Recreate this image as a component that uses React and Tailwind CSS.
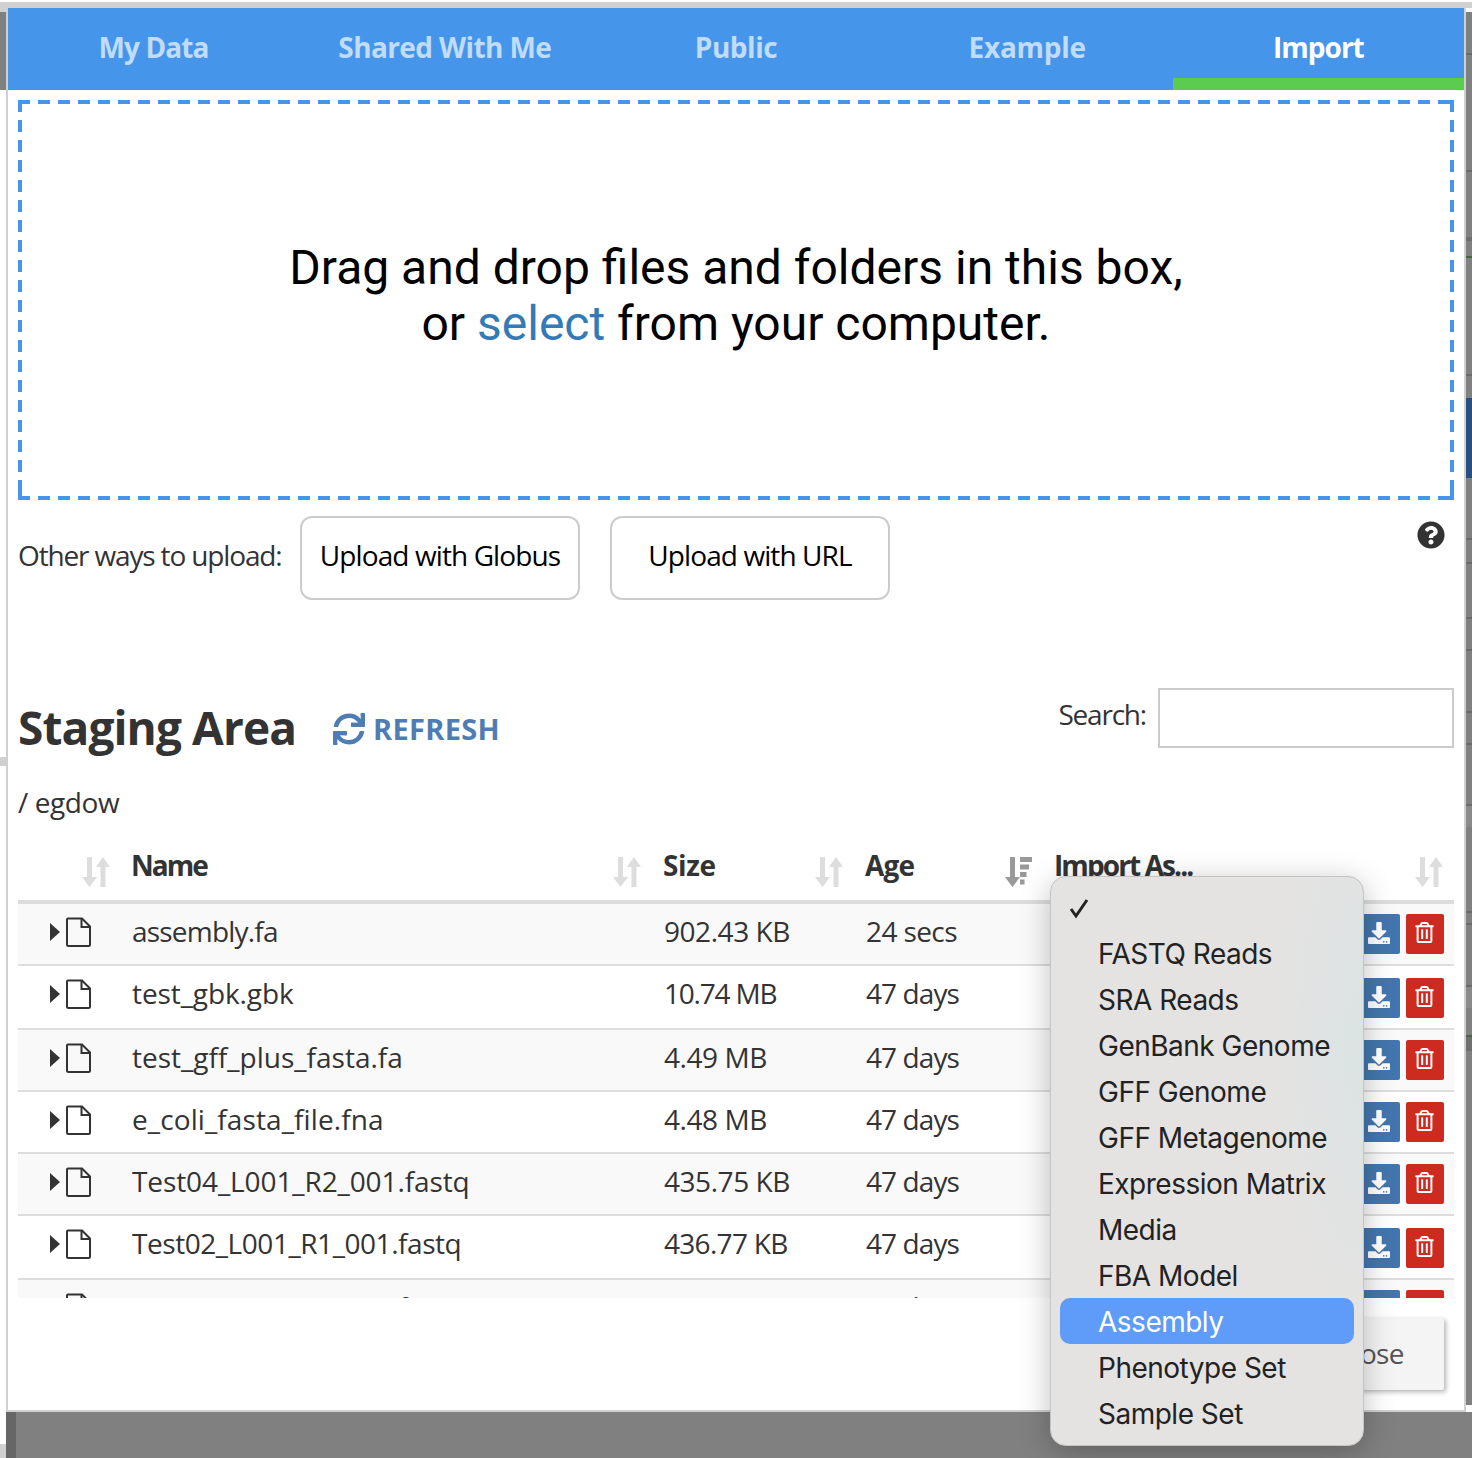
import React from "react";
import { FaQuestionCircle, FaSync, FaDownload, FaRegTrashAlt } from "react-icons/fa";

const tabs = [
  { t: "My Data", tr: "tracking-[-0.9px]" },
  { t: "Shared With Me", tr: "tracking-[-0.6px]" },
  { t: "Public", tr: "tracking-[-0.45px]" },
  { t: "Example", tr: "tracking-[-0.25px]" },
  { t: "Import", tr: "tracking-[-1px]" },
];

const rows = [
  { name: "assembly.fa", nt: "tracking-[-0.8px]", size: "902.43 KB", st: "tracking-[-0.45px]", age: "24 secs", at: "tracking-[-0.6px]", h: "h-[62px]", btn: "pt-[10px]", odd: true },
  { name: "test_gbk.gbk", nt: "tracking-[-0.1px]", size: "10.74 MB", st: "tracking-[-1.2px]", age: "47 days", at: "tracking-[-0.9px]", h: "h-[64px]", btn: "pt-[12px]" },
  { name: "test_gff_plus_fasta.fa", nt: "tracking-[0px]", size: "4.49 MB", st: "tracking-[-0.45px]", age: "47 days", at: "tracking-[-0.9px]", h: "h-[62px]", btn: "pt-[10px]", odd: true },
  { name: "e_coli_fasta_file.fna", nt: "tracking-[0.1px]", size: "4.48 MB", st: "tracking-[-0.45px]", age: "47 days", at: "tracking-[-0.9px]", h: "h-[62px]", btn: "pt-[10px]" },
  { name: "Test04_L001_R2_001.fastq", nt: "tracking-[-0.1px]", size: "435.75 KB", st: "tracking-[-0.45px]", age: "47 days", at: "tracking-[-0.9px]", h: "h-[62px]", btn: "pt-[10px]", odd: true },
  { name: "Test02_L001_R1_001.fastq", nt: "tracking-[-0.45px]", size: "436.77 KB", st: "tracking-[-0.7px]", age: "47 days", at: "tracking-[-0.9px]", h: "h-[64px]", btn: "pt-[12px]" },
  { name: "Test03_L001_R1_001.fastq", nt: "tracking-[-0.45px]", size: "437.14 KB", st: "tracking-[-0.45px]", age: "47 days", at: "tracking-[-0.9px]", h: "h-[62px]", btn: "pt-[10px]", odd: true },
];

const menu = ["FASTQ Reads", "SRA Reads", "GenBank Genome", "GFF Genome", "GFF Metagenome", "Expression Matrix", "Media", "FBA Model", "Assembly", "Phenotype Set", "Sample Set"];

const rightStrip = [
  [4, "#fff"], [41, "#808080"], [2, "#6a6a6a"], [115, "#808080"], [2, "#6a6a6a"], [65, "#808080"], [4, "#6e6e6e"], [15, "#808080"], [2, "#3f6b3f"],
  [116, "#808080"], [2, "#6a6a6a"], [22, "#808080"], [80, "#27507f"], [60, "#808080"], [2, "#6a6a6a"], [22, "#808080"], [2, "#6a6a6a"], [53, "#808080"], [2, "#6a6a6a"], [30, "#808080"], [2, "#6a6a6a"], [60, "#808080"], [2, "#6a6a6a"],
  [30, "#808080"], [2, "#6a6a6a"], [59, "#808080"], [2, "#6a6a6a"], [21, "#8a8a8a"], [84, "#808080"], [2, "#6a6a6a"], [10, "#808080"], [2, "#6a6a6a"], [60, "#808080"], [2, "#6a6a6a"], [21, "#8a8a8a"], [27, "#808080"], [2, "#3f6b3f"], [14, "#6f6f6f"], [354, "#808080"],
];

function SortIcon({ active }) {
  if (active) {
    return (
      <svg width="28" height="30" viewBox="0 0 28 30" className="shrink-0">
        <path d="M5 0h5v20h5L7.500 30 0 20h5z" fill="#999" />
        <path d="M15 0h12v5H15zM15 7.500h9v5h-9zM15 15h6.500v5H15zM15 22.500h4.500v5H15z" fill="#999" />
      </svg>
    );
  }
  return (
    <svg width="28" height="30" viewBox="0 0 28 30" className="shrink-0">
      <path d="M5 0h5v20h5L7.500 30 0 20h5z" fill="#ddd" />
      <path d="M21 0l7 10h-4.500v20h-5V10H14z" fill="#ddd" />
    </svg>
  );
}

function FileIcon() {
  return (
    <svg width="26" height="30" viewBox="0 0 26 30" className="shrink-0">
      <path d="M2 1.500h14l8 8v18a1.500 1.500 0 0 1-1.500 1.500h-20A1.500 1.500 0 0 1 1 27.500V2.500A1 1 0 0 1 2 1.500z" fill="none" stroke="#333" strokeWidth="2" />
      <path d="M15.500 1.500v8.500H24" fill="none" stroke="#333" strokeWidth="2" />
    </svg>
  );
}

function Caret() {
  return (
    <svg width="10" height="18" viewBox="0 0 10 18" className="shrink-0">
      <path d="M0 0l10 9-10 9z" fill="#333" />
    </svg>
  );
}

export default function App() {
  return (
    <div className="relative w-[1472px] h-[1458px] bg-white flex flex-col overflow-hidden text-[#333] font-['Open_Sans',sans-serif]">
      <div className="h-[2px] bg-white" />
      <div className="h-[6px] bg-[#d0d0d0]" />

      <div className="flex h-[1404px]">
        <div className="w-[6px] flex flex-col shrink-0">
          <div className="h-[4px] bg-[#d0d0d0]" />
          <div className="h-[78px] bg-[#808080]" />
          <div className="h-[667px] bg-white" />
          <div className="h-[9px] bg-[#d0d0d0]" />
        </div>

        <div className="w-[1460px] shrink-0 border-x-2 border-b-2 border-[#d0d0d0] bg-white flex flex-col">
          <div className="h-[82px] bg-[#4596ea] flex shrink-0">
            {tabs.map(({ t, tr }) => (
              <div
                key={t}
                className={
                  t === "Import"
                    ? `flex-1 text-center text-white text-[28px] font-bold ${tr} pt-[18px] border-b-[12px] border-[#5ccc50]`
                    : `flex-1 text-center text-[#c0dcf9] text-[28px] font-bold ${tr} pt-[18px]`
                }
              >
                {t}
              </div>
            ))}
          </div>

          <div className="px-[10px] pt-[10px] flex flex-col">
            <div className="h-[400px] [background:linear-gradient(#4596ea,#4596ea)_right_bottom/12px_4px_no-repeat,linear-gradient(#4596ea,#4596ea)_right_bottom/4px_12px_no-repeat,linear-gradient(#4596ea,#4596ea)_right_top/12px_4px_no-repeat,linear-gradient(#4596ea,#4596ea)_left_bottom/4px_12px_no-repeat,linear-gradient(to_right,#4596ea_12px,transparent_12px)_left_top/20px_4px_repeat-x,linear-gradient(to_right,#4596ea_12px,transparent_12px)_left_bottom/20px_4px_repeat-x,linear-gradient(to_bottom,#4596ea_12px,transparent_12px)_left_top/4px_20px_repeat-y,linear-gradient(to_bottom,#4596ea_12px,transparent_12px)_right_top/4px_20px_repeat-y] flex flex-col items-center justify-center pb-[8px] font-['Roboto',sans-serif] text-[48px] leading-[56px] text-black">
              <div>Drag and drop files and folders in this box,</div>
              <div>
                or <span className="text-[#337ab7]">select</span> from your computer.
              </div>
            </div>

            <div className="mt-[16px] h-[84px] flex items-start">
              <div className="h-[84px] pb-[6px] flex items-center text-[28px] tracking-[-1.15px] w-[282px]">Other ways to upload:</div>
              <div className="w-[280px] h-[84px] pb-[6px] border-2 border-[#ccc] rounded-[12px] flex items-center justify-center text-[28px] tracking-[-0.9px] text-black">Upload with Globus</div>
              <div className="ml-[30px] w-[280px] h-[84px] pb-[6px] border-2 border-[#ccc] rounded-[12px] flex items-center justify-center text-[28px] tracking-[-0.9px] text-black">Upload with URL</div>
              <div className="ml-auto mr-[9px] mt-[5px] text-[#333]">
                <FaQuestionCircle size={28} />
              </div>
            </div>

            <div className="mt-[88px] h-[60px] flex items-start">
              <div className="text-[46px] leading-[78px] h-[60px] font-bold tracking-[-0.9px] w-[315px]">Staging Area</div>
              <div className="h-[82px] flex items-center text-[#4f7db3] font-bold text-[29px] tracking-[0.3px]">
                <FaSync size={32} className="mr-[8px]" />
                REFRESH
              </div>
              <div className="ml-auto flex items-start">
                <div className="text-[28px] tracking-[-1.2px] mr-[12px] leading-[52px]">Search:</div>
                <div className="w-[296px] h-[60px] border-2 border-[#ccc]" />
              </div>
            </div>

            <div className="mt-[34px] h-[44px] pb-[4px] flex items-center text-[28px] tracking-[-0.4px]">/ egdow</div>

            <div className="mt-[16px] h-[456px] overflow-hidden">
              <div className="h-[58px] border-b-4 border-[#ddd] box-content grid grid-cols-[104px_532px_202px_189px_408px] font-bold text-[28px]">
                <div className="flex justify-end pr-[12px] pt-[15px]"><SortIcon /></div>
                <div className="pl-[9px] pr-[13px] pt-[2px] flex justify-between"><span className="tracking-[-2px]">Name</span><span className="pt-[13px]"><SortIcon /></span></div>
                <div className="pl-[9px] pr-[13px] pt-[2px] flex justify-between"><span className="tracking-[-0.4px]">Size</span><span className="pt-[13px]"><SortIcon /></span></div>
                <div className="pl-[9px] pr-[12px] pt-[2px] flex justify-between"><span className="tracking-[-0.8px]">Age</span><span className="pt-[13px]"><SortIcon active /></span></div>
                <div className="pl-[9px] pr-[10px] pt-[2px] flex justify-between"><span className="tracking-[-1.9px]">Import As...</span><span className="pt-[13px]"><SortIcon /></span></div>
              </div>
              {rows.map((r) => (
                <div
                  key={r.name}
                  className={`${r.h} border-b-2 border-[#ddd] grid grid-cols-[104px_532px_202px_189px_408px] text-[28px] ${r.odd ? "bg-[#f9f9f9]" : "bg-white"}`}
                >
                  <div className="flex items-start gap-[6px] pl-[32px] pt-[13px]">
                    <span className="pt-[6px]"><Caret /></span>
                    <FileIcon />
                  </div>
                  <div className={`pl-[10px] pt-[6px] ${r.nt}`}>{r.name}</div>
                  <div className={`pl-[10px] pt-[6px] ${r.st}`}>{r.size}</div>
                  <div className={`pl-[10px] pt-[6px] ${r.at}`}>{r.age}</div>
                  <div className={`flex justify-end gap-[6px] pr-[9px] ${r.btn}`}>
                    <div className="w-[42px] h-[40px] pb-[2px] rounded-[2px] bg-[#4376ae] flex items-center justify-center text-white"><FaDownload size={22} /></div>
                    <div className="w-[38px] h-[40px] pb-[3px] pr-[1px] rounded-[2px] bg-[#cd2a20] flex items-center justify-center text-white"><FaRegTrashAlt size={21} /></div>
                  </div>
                </div>
              ))}
            </div>

            <div className="mt-[20px] self-end mr-[10px] h-[72px] w-[160px] bg-[#f4f4f4] rounded-[2px] shadow-[2px_2px_5px_rgba(0,0,0,0.3)] flex items-center justify-end pr-[40px] pb-[2px] text-[28px] text-[#555] tracking-[-0.6px]">Close</div>
          </div>
        </div>

        <div className="w-[6px] flex flex-col shrink-0">
          {rightStrip.map(([h, c], i) => (
            <div key={i} className="shrink-0" style={{ height: h, backgroundColor: c }} />
          ))}
        </div>
      </div>

      <div className="h-[46px] flex">
        <div className="w-[6px] flex flex-col">
          <div className="h-[32px] bg-white" />
          <div className="h-[14px] bg-[#d0d0d0]" />
        </div>
        <div className="w-[10px] bg-[#666]" />
        <div className="flex-1 bg-[#808080]" />
      </div>

      <div className="absolute left-[1050px] top-[876px] w-[314px] h-[570px] rounded-[16px] border border-[#c4c4c4] bg-[#e4e3e2] bg-[radial-gradient(ellipse_90px_280px_at_100%_30%,#dbe3e3,#e4e3e2)] shadow-[0_6px_30px_rgba(0,0,0,0.25)] px-[9px] pt-[7px] font-['Inter',sans-serif] text-[28px] tracking-[-0.5px] text-[#222]">
        <div className="h-[46px] flex items-center pl-[8px] pt-[2px]">
          <svg width="22" height="22" viewBox="0 0 22 22"><path d="M3 12l5 7L19 3" fill="none" stroke="#222" strokeWidth="3" /></svg>
        </div>
        {menu.map((m) => (
          <div
            key={m}
            className={
              m === "Assembly"
                ? "h-[46px] flex items-center pl-[38px] pt-[2px] rounded-[10px] bg-[#5f9bf8] text-white"
                : "h-[46px] flex items-center pl-[38px] pt-[2px]"
            }
          >
            {m}
          </div>
        ))}
      </div>
    </div>
  );
}
